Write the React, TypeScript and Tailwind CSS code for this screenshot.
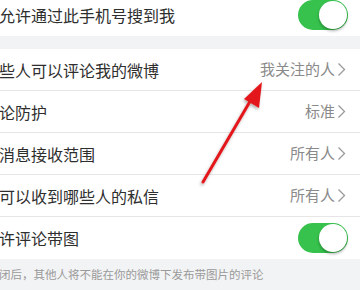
import React from "react";

const font = { fontFamily: '"Noto Sans CJK SC", "Noto Sans", sans-serif' };

function Toggle() {
  return (
    <div className="relative w-[50px] h-[30px] rounded-full bg-[#36c24c] shrink-0">
      <div className="absolute right-[1px] top-[1px] w-[28px] h-[28px] rounded-full bg-white shadow-[0_2px_3px_rgba(0,0,0,0.3)]" />
    </div>
  );
}

function Chevron() {
  return (
    <svg width="9" height="15" viewBox="0 0 9 15" className="shrink-0 ml-[2px]">
      <path d="M1.5 1.5 L7.5 7.5 L1.5 13.5" fill="none" stroke="#9a9a9a" strokeWidth="1.3" />
    </svg>
  );
}

function Row({ label, value, toggle, border = true }: { label: string; value?: string; toggle?: boolean; border?: boolean }) {
  return (
    <div className={`flex items-center justify-between h-[42px] bg-white ${border ? "border-b border-[#e6e6e6]" : ""}`}>
      <span className="text-[16px] text-[#2e2e2e] whitespace-nowrap -ml-[1px]">{label}</span>
      {toggle ? (
        <div className="mr-[12px]"><Toggle /></div>
      ) : (
        <div className="flex items-center mr-[14px]">
          <span className="text-[15px] text-[#8a8a8a]">{value}</span>
          <Chevron />
        </div>
      )}
    </div>
  );
}

export default function App() {
  return (
    <div className="w-[360px] h-[290px] overflow-hidden bg-[#f2f3f4] relative" style={font}>
      <div className="-mt-[6px]">
        <Row label="允许通过此手机号搜到我" toggle border={false} />
      </div>
      <div className="h-[13px] bg-[#f2f3f4]" />
      <Row label="些人可以评论我的微博" value="我关注的人" />
      <Row label="论防护" value="标准" />
      <Row label="消息接收范围" value="所有人" />
      <Row label="可以收到哪些人的私信" value="所有人" />
      <Row label="许评论带图" toggle border={false} />
      <div className="pt-[7px] text-[11.5px] text-[#9a9a9a] whitespace-nowrap -ml-[1px]">
        闭后，其他人将不能在你的微博下发布带图片的评论
      </div>
      <svg className="absolute left-0 top-0 pointer-events-none" width="360" height="290" viewBox="0 0 360 290">
        <defs>
          <filter id="sh" x="-20%" y="-20%" width="140%" height="140%">
            <feDropShadow dx="-1" dy="2" stdDeviation="1.5" floodColor="#000" floodOpacity="0.3" />
          </filter>
        </defs>
        <g filter="url(#sh)">
          <line x1="203" y1="182" x2="252" y2="98" stroke="#e3191b" strokeWidth="3" strokeLinecap="round" />
          <polygon points="262,82 259,108 244,99" fill="#e3191b" />
        </g>
      </svg>
    </div>
  );
}
